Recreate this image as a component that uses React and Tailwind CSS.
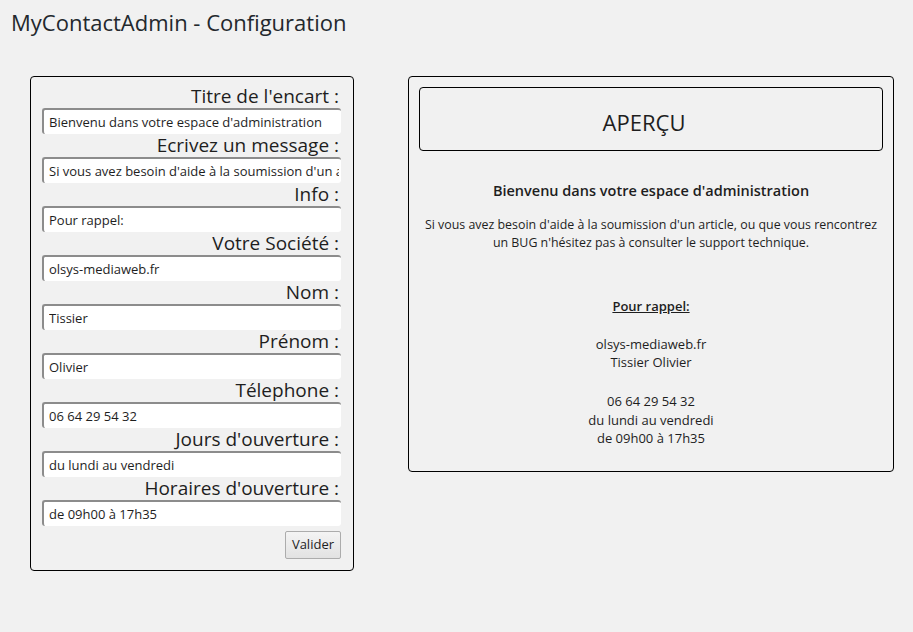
const FIELDS = [
  { label: "Titre de l'encart :", value: "Bienvenu dans votre espace d'administration" },
  { label: 'Ecrivez un message :', value: "Si vous avez besoin d'aide à la soumission d'un article, ou que vous rencontrez un BUG n'hésitez pas à consulter le support technique." },
  { label: 'Info :', value: 'Pour rappel:' },
  { label: 'Votre Société :', value: 'olsys-mediaweb.fr' },
  { label: 'Nom :', value: 'Tissier' },
  { label: 'Prénom :', value: 'Olivier' },
  { label: 'Télephone :', value: '06 64 29 54 32' },
  { label: "Jours d'ouverture :", value: 'du lundi au vendredi' },
  { label: "Horaires d'ouverture :", value: 'de 09h00 à 17h35' },
];

const Field = ({ label, value }) => (
  <div className="flex flex-col">
    <label className="text-[19px] leading-[23px] text-right pr-[2px] text-[#1e1e1e]">{label}</label>
    <input
      readOnly
      defaultValue={value}
      className="h-[26px] w-full bg-white rounded-[3px] border-t-2 border-l-2 border-[#8c8c8c] pl-[5px] pr-[2px] text-[13px] text-[#1e1e1e] outline-none"
      style={{ fontFamily: 'inherit' }}
    />
  </div>
);

export default function App() {
  return (
    <div className="min-h-screen bg-[#f1f1f1] text-[#1e1e1e]" style={{ fontFamily: '"Open Sans", "Noto Sans", sans-serif' }}>
      <h1 className="pl-[11px] pt-[8px] text-[22px] leading-[28px] text-[#23282d]">MyContactAdmin - Configuration</h1>

      <div className="flex items-start gap-[54px] pl-[30px] mt-[40px]">
        <div className="w-[324px] border border-black rounded-[4px] pl-[11px] pr-[12px] pt-[8px] pb-[11px]">
          {FIELDS.map(f => <Field key={f.label} {...f} />)}
          <div className="flex justify-end mt-[5px]">
            <button className="h-[28px] px-[6px] text-[13px] rounded-[2px] border border-[#acacac] bg-gradient-to-b from-[#f4f4f4] to-[#e2e2e2] text-[#1e1e1e]">Valider</button>
          </div>
        </div>

        <div className="w-[486px] border border-black rounded-[4px] px-[10px] pt-[10px] pb-[23px] flex flex-col items-center text-center">
          <div className="w-full h-[64px] border border-black rounded-[4px] flex items-center justify-center text-[22px] pr-[14px] pt-[6px]">APERÇU</div>
          <h2 className="mt-[30px] text-[14.5px] leading-[20px] font-semibold">Bienvenu dans votre espace d'administration</h2>
          <p className="mt-[15px] text-[12.4px] leading-[18px] whitespace-nowrap">
            Si vous avez besoin d'aide à la soumission d'un article, ou que vous rencontrez<br />
            un BUG n'hésitez pas à consulter le support technique.
          </p>
          <p className="mt-[45px] text-[13px] leading-[18px] font-semibold underline">Pour rappel:</p>
          <p className="mt-[20px] text-[13px] leading-[18px]">olsys-mediaweb.fr<br />Tissier Olivier</p>
          <p className="mt-[21px] text-[13px] leading-[18.5px]">06 64 29 54 32<br />du lundi au vendredi<br />de 09h00 à 17h35</p>
        </div>
      </div>
    </div>
  );
}
